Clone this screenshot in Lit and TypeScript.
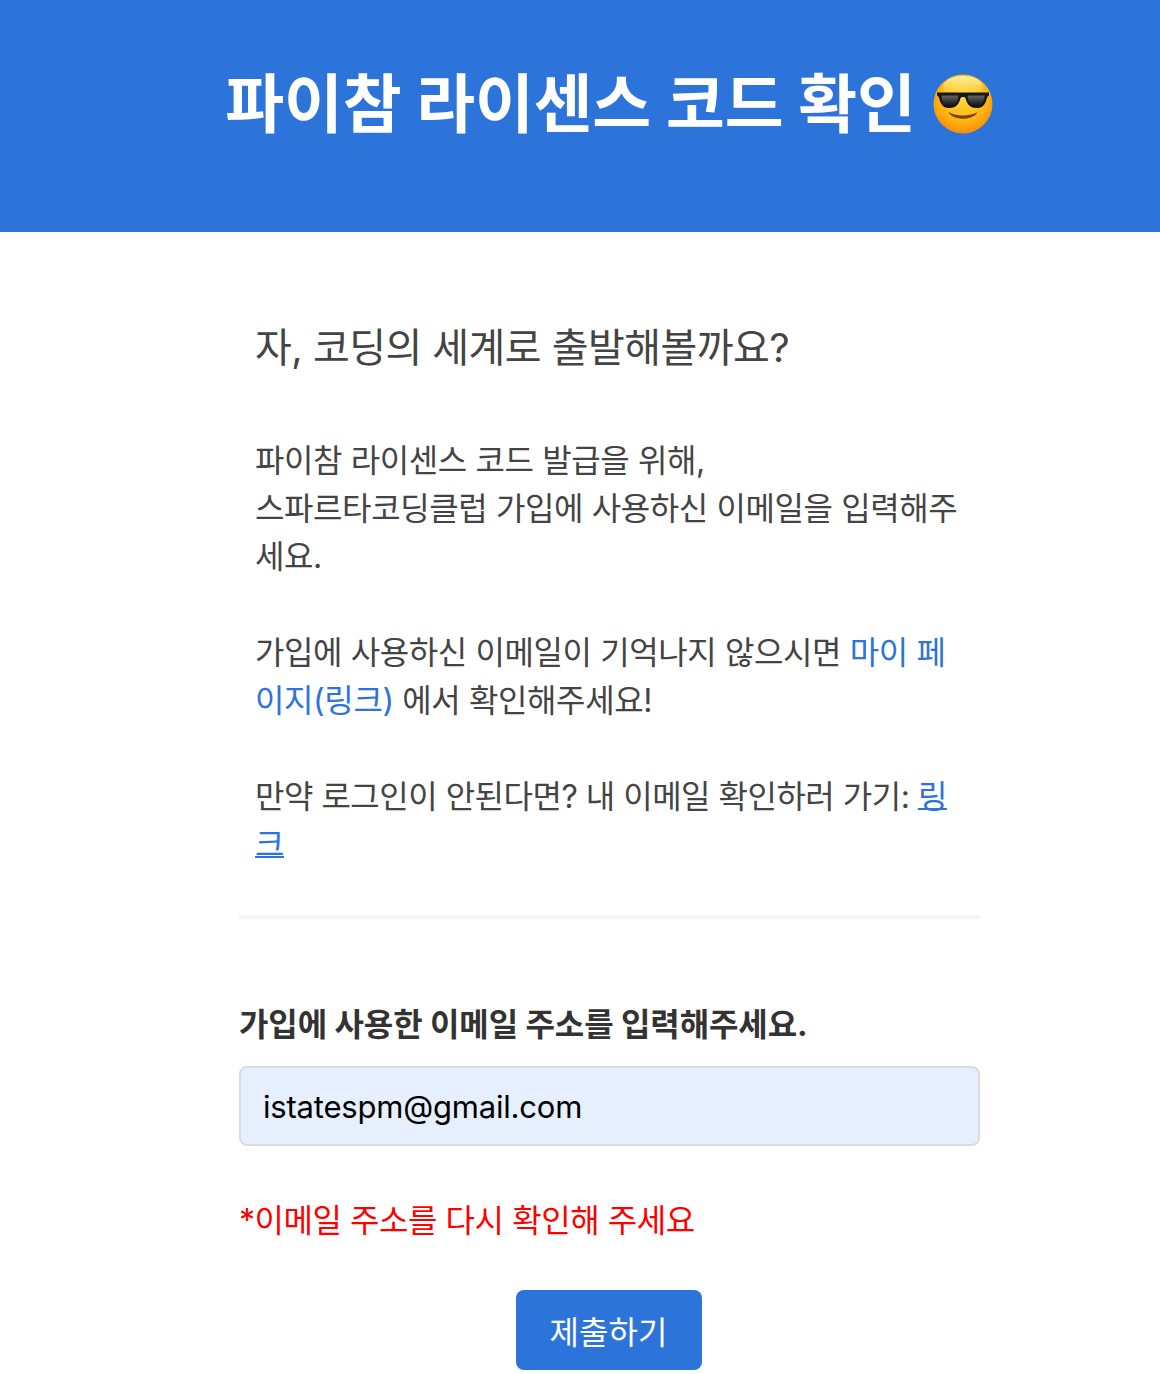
import { LitElement, html, css } from "lit";
import { customElement } from "lit/decorators.js";

@customElement("app-root")
export class AppRoot extends LitElement {
  static styles = css`
    :host { display: block; font-family: Inter, "Noto Sans CJK KR", sans-serif; background: #fff; }
    .hero { height: 232px; background: #2d74da; display: flex; justify-content: center; box-sizing: border-box; padding-top: 21px; padding-left: 58px; }
    h1 { margin: 0; color: #fff; font-size: 64px; font-weight: 700; line-height: 80px; letter-spacing: -0.2px; display: flex; align-items: center; gap: 17px; height: 166px; }
    .emoji { width: 60px; height: 60px; flex: none; }
    .wrap { width: 741px; margin-left: 239px; }
    .intro { padding: 92px 16px 0; color: #444; }
    h2 { margin: 0 0 64px; font-size: 40px; font-weight: 400; line-height: 48px; letter-spacing: -0.55px; }
    p { margin: 0 0 48px; font-size: 32px; line-height: 48px; letter-spacing: -0.4px; position: relative; top: 1px; }
    p.tight { letter-spacing: -0.5px; }
    a { color: #2d74da; text-decoration: none; }
    a.u { text-decoration: underline; text-decoration-thickness: 1.5px; text-underline-offset: 0px; }
    hr { border: 0; height: 4px; background: #f5f5f5; margin: -1px 0 0; }
    label { display: block; margin-top: 86px; font-size: 32px; font-weight: 700; line-height: 40px; color: #333; letter-spacing: -0.1px; }
    .input { margin-top: 21px; height: 80px; box-sizing: border-box; background: #e6effd; border: 2px solid #dcdcdc; border-radius: 8px; padding: 0 22px; font-size: 31px; letter-spacing: -0.2px; display: flex; align-items: center; color: #000; }
    .err { margin-top: 51px; font-size: 32px; line-height: 48px; color: #f00; letter-spacing: -0.45px; }
    .btn-row { display: flex; justify-content: center; margin-top: 45px; padding-right: 2px; }
    .btn { width: 186px; height: 80px; background: #2d74da; color: #fff; border-radius: 8px; font-size: 32px; display: flex; align-items: center; justify-content: center; box-sizing: border-box; }
  `;
  render() {
    return html`
      <div class="hero">
        <h1>파이참 라이센스 코드 확인
          <svg class="emoji" viewBox="0 0 60 60">
            <defs>
              <radialGradient id="f" cx="50%" cy="40%" r="62%">
                <stop offset="0" stop-color="#ffd93b"/>
                <stop offset="0.65" stop-color="#ffb40f"/>
                <stop offset="1" stop-color="#f48a0a"/>
              </radialGradient>
              <linearGradient id="s" x1="0" y1="0" x2="0" y2="1">
                <stop offset="0" stop-color="#666"/>
                <stop offset="0.5" stop-color="#3a3a3a"/>
                <stop offset="1" stop-color="#111"/>
              </linearGradient>
              <linearGradient id="h" x1="0" y1="0" x2="0" y2="1">
                <stop offset="0" stop-color="#fff6b0" stop-opacity="0.95"/>
                <stop offset="1" stop-color="#ffe45c" stop-opacity="0"/>
              </linearGradient>
            </defs>
            <circle cx="30" cy="30" r="29.5" fill="url(#f)"/>
            <ellipse cx="30" cy="13" rx="20" ry="11" fill="url(#h)"/>
            <path d="M4 18.5 H56 V21.5 C54.5 22 54 23.5 53.5 25.5 C52 31.5 49 34 43.5 34 C38 34 34 31 32.5 24 C32 22.5 28 22.5 27.5 24 C26 31 22 34 16.5 34 C11 34 8 31.5 6.5 25.5 C6 23.5 5.5 22 4 21.5 Z" fill="#151515"/>
            <path d="M8.5 21.5 H25.5 C25.5 27 22 32 16.5 32 C11 32 8.5 27 8.5 21.5 Z" fill="url(#s)"/>
            <path d="M34.5 21.5 H51.5 C51.5 27 49 32 43.5 32 C38 32 34.5 27 34.5 21.5 Z" fill="url(#s)"/>
            <path d="M15.5 38 C22 42.5 38 42.5 44.5 38 C41 47 19 47 15.5 38 Z" fill="#7a4408"/>
          </svg>
        </h1>
      </div>
      <div class="wrap">
        <div class="intro">
          <h2>자, 코딩의 세계로 출발해볼까요?</h2>
          <p>파이참 라이센스 코드 발급을 위해,<br>스파르타코딩클럽 가입에 사용하신 이메일을 입력해주세요.</p>
          <p>가입에 사용하신 이메일이 기억나지 않으시면 <a href="#">마이 페이지(링크)</a> 에서 확인해주세요!</p>
          <p class="tight">만약 로그인이 안된다면? 내 이메일 확인하러 가기: <a class="u" href="#">링크</a></p>
        </div>
        <hr>
        <label>가입에 사용한 이메일 주소를 입력해주세요.</label>
        <div class="input">istatespm@gmail.com</div>
        <div class="err">*이메일 주소를 다시 확인해 주세요</div>
        <div class="btn-row"><div class="btn">제출하기</div></div>
      </div>
    `;
  }
}
